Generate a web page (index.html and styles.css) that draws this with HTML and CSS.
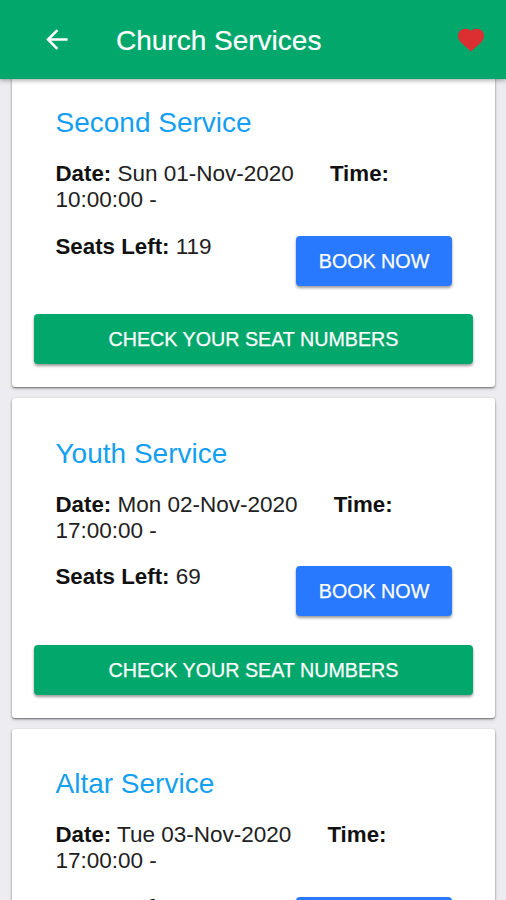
FILE: index.html
```html
<!DOCTYPE html>
<html lang="en">
<head>
<meta charset="utf-8">
<title>Church Services</title>
<link rel="stylesheet" href="styles.css">
</head>
<body>
<header class="navbar">
  <svg class="back" viewBox="0 0 24 24"><path d="M20.6 11H7.83l5.59-5.59L12 4l-8 8 8 8 1.41-1.41L7.83 13H20.6v-2z"/></svg>
  <h1 class="title">Church Services</h1>
  <svg class="heart" viewBox="0 0 26 24"><path d="M13 23.500L3 14.500C-.5 11.200-.8 6 1.600 3.200C4.300.1 9 .1 11.800 2Q13 3 14.200 2C17 .1 21.700.1 24.400 3.200C26.800 6 26.500 11.200 23 14.500Z"/></svg>
</header>
<main class="list">
  <section class="card">
    <h2 class="name">Second Service</h2>
    <p class="when"><b>Date:</b> Sun 01-Nov-2020<b class="time">Time:</b><br>10:00:00 -</p>
    <div class="row"><p class="seats"><b>Seats Left:</b> 119</p><button class="btn book">BOOK NOW</button></div>
    <button class="btn check">CHECK YOUR SEAT NUMBERS</button>
  </section>
  <section class="card">
    <h2 class="name">Youth Service</h2>
    <p class="when"><b>Date:</b> Mon 02-Nov-2020<b class="time">Time:</b><br>17:00:00 -</p>
    <div class="row"><p class="seats"><b>Seats Left:</b> 69</p><button class="btn book">BOOK NOW</button></div>
    <button class="btn check">CHECK YOUR SEAT NUMBERS</button>
  </section>
  <section class="card">
    <h2 class="name">Altar Service</h2>
    <p class="when"><b>Date:</b> Tue 03-Nov-2020<b class="time">Time:</b><br>17:00:00 -</p>
    <div class="row"><p class="seats"><b>Seats Left:</b> 100</p><button class="btn book">BOOK NOW</button></div>
  </section>
</main>
</body>
</html>
```
FILE: styles.css
```css
* { box-sizing: border-box; }
body {
  margin: 0;
  height: 900px;
  overflow: hidden;
  display: flex;
  flex-direction: column;
  background: #ededf1;
  color: #212121;
  font-family: "Liberation Sans", Arial, sans-serif;
  font-size: 22.5px;
}
h1, h2, p { margin: 0; font-weight: 400; }
b { color: #111; font-size: 22.3px; }
.navbar {
  flex: none;
  height: 79px;
  padding: 0 22px 0 41px;
  display: flex;
  align-items: center;
  background: #02a76c;
  color: #fff;
  box-shadow: 0 1px 5px rgba(0, 0, 0, .4);
  z-index: 1;
}
.back { width: 31px; height: 31px; fill: #fff; }
.title { flex: 1; margin-left: 44px; padding-top: 2px; font-size: 28px; line-height: 34px; -webkit-text-stroke: .2px #fff; }
.heart { width: 26px; height: 24px; fill: #dc2f32; }
.list {
  flex: 1;
  min-height: 0;
  overflow: hidden;
  padding: 0 11px 0 12px;
}
.card {
  height: 319.5px;
  margin-bottom: 11px;
  padding: 38.5px 22px 0;
  background: #fff;
  border-radius: 3px;
  box-shadow: 0 1px 2px rgba(0, 0, 0, .5), 0 2px 4px rgba(0, 0, 0, .12);
}
.card:first-child { margin-top: -11.5px; }
.name { padding-left: 21.5px; font-size: 28px; line-height: 34px; color: #149ff0; }
.when { margin-top: 21px; padding-left: 21.5px; line-height: 26px; white-space: nowrap; }
.time { margin-left: 36px; }
.row { display: flex; justify-content: space-between; margin-top: 22.5px; padding: 0 21px 0 21.5px; }
.seats { margin-top: -1px; line-height: 24px; }
.btn {
  display: block;
  height: 50px;
  border: 0;
  border-radius: 4px;
  padding: 0;
  color: #fff;
  font: 19.7px/50px "Liberation Sans", Arial, sans-serif;
  -webkit-text-stroke: .25px #fff;
  box-shadow: 0 2px 3px rgba(0, 0, 0, .4);
}
.book { width: 156px; background: #2979ff; }
.check { width: 439px; margin-top: 28.5px; background: #02a76c; }
```
